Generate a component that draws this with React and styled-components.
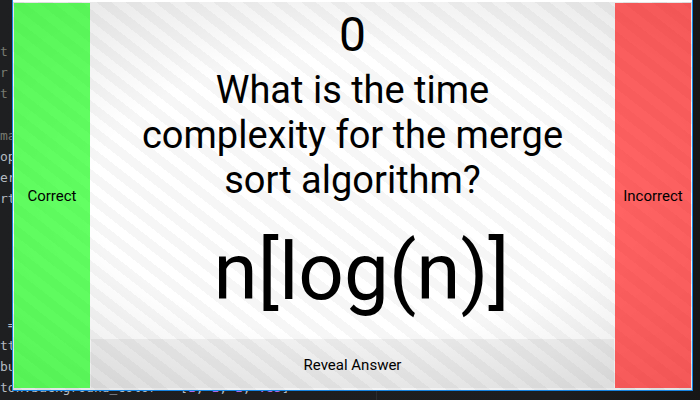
import React, { useState } from "react";
import styled, { createGlobalStyle } from "styled-components";

const GlobalStyle = createGlobalStyle`
  * { box-sizing: border-box; }
  body { margin: 0; background: #1c1d1f; }
`;

const Desktop = styled.div`
  position: relative;
  height: 100vh;
  overflow: hidden;
  background:
    linear-gradient(#2b2c2e, #2b2c2e) 376px 0 / 1px 100% no-repeat,
    linear-gradient(90deg, #1e1f21 0%, #1c1d1f 80%, #161616 100%);
`;

const Editor = styled.pre`
  margin: 0;
  padding-top: 41px;
  font: 13px/21px "DejaVu Sans Mono", monospace;
`;

const CodeLine = styled.span`
  display: block;
  width: max-content;
  min-height: 21px;
  color: ${({ $comment }) => ($comment ? "#777a70" : "#b4bac0")};
`;

const NumberToken = styled.span`
  color: #b267e6;
`;

const Window = styled.main`
  position: absolute;
  inset: 0 7px 9px 12px;
  display: grid;
  grid-template-columns: 76px 1fr 76px;
  column-gap: 1px;
  padding: 3px 1px 2px;
  border: solid #1683e0;
  border-width: 0 1px 1px;
  font-family: Roboto, sans-serif;
  background:
    linear-gradient(#fff 2px, transparent 2px),
    radial-gradient(ellipse 85% 80% at 50% 50%, rgba(0, 0, 0, 0) 45%, rgba(0, 0, 0, 0.15) 100%),
    repeating-linear-gradient(38deg, #f6f6f6 0 6px, #fff 6px 15px, #f6f6f6 15px 18px);
`;

const AnswerButton = styled.button`
  padding: 0;
  border: 0;
  font: 15px/18px Roboto, sans-serif;
  color: #000;
  background: ${({ $tint }) => $tint};
  cursor: pointer;
`;

const RevealButton = styled(AnswerButton)`
  padding-top: 3px;
`;

const Card = styled.section`
  display: grid;
  grid-template-rows: 65px 136px 1fr 49px;
  min-width: 0;
  text-align: center;
  color: #000;
`;

const Score = styled.output`
  font-size: 48px;
  line-height: 64px;
`;

const Question = styled.h1`
  margin: 0;
  padding: 0 40px;
  font-size: 38px;
  line-height: 45px;
  font-weight: 400;
`;

const Answer = styled.p`
  margin: 0;
  padding-left: 18px;
  align-self: center;
  font-size: 80px;
  line-height: 94px;
`;

const COMMENTS = ["t", "r", "t", "", "ma"];
const CODE = ["op", "er", "rt", "", "", "", "", "", " =", "tt", "bu"];

export default function App() {
  const [score, setScore] = useState(0);
  const [revealed, setRevealed] = useState(true);
  return (
    <Desktop>
      <GlobalStyle />
      <Editor aria-hidden="true">
        {COMMENTS.map((line, i) => (
          <CodeLine key={i} $comment>{line}</CodeLine>
        ))}
        {CODE.map((line, i) => (
          <CodeLine key={i}>{line}</CodeLine>
        ))}
        <CodeLine>
          {"ton.background_color = ["}
          <NumberToken>1</NumberToken>, <NumberToken>1</NumberToken>, <NumberToken>1</NumberToken>, <NumberToken>.85</NumberToken>]
        </CodeLine>
      </Editor>
      <Window>
        <AnswerButton $tint="rgba(0, 255, 0, 0.61)" onClick={() => setScore(score + 1)}>
          Correct
        </AnswerButton>
        <Card>
          <Score>{score}</Score>
          <Question>What is the time complexity for the merge sort algorithm?</Question>
          <Answer>{revealed ? "n[log(n)]" : ""}</Answer>
          <RevealButton $tint="rgba(0, 0, 0, 0.05)" onClick={() => setRevealed(!revealed)}>
            Reveal Answer
          </RevealButton>
        </Card>
        <AnswerButton $tint="rgba(255, 0, 0, 0.61)" onClick={() => setScore(score - 1)}>
          Incorrect
        </AnswerButton>
      </Window>
    </Desktop>
  );
}
